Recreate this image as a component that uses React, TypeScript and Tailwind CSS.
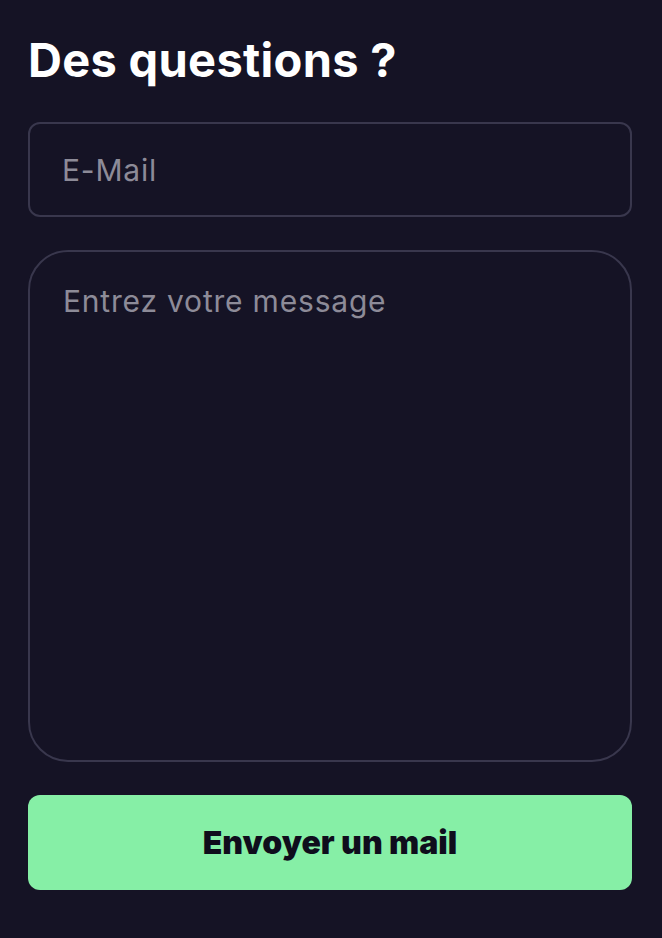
import React from "react";

export default function App() {
  return (
    <div
      className="min-h-screen w-full bg-[#151325] pl-7 pr-[30px] pt-[32px] pb-12"
      style={{ fontFamily: "Inter, 'Liberation Sans', sans-serif" }}
    >
      <h1 className="text-[47px] leading-[56px] font-bold text-white tracking-[0.3px]">
        Des questions ?
      </h1>
      <form className="mt-[34px] flex flex-col gap-[33px]" onSubmit={(e) => e.preventDefault()}>
        <input
          type="email"
          placeholder="E-Mail"
          className="h-[95px] w-full rounded-[12px] border-2 border-[#39374d] bg-transparent px-[32px] text-[30px] tracking-[0.8px] text-white placeholder:text-[#8d8b98] outline-none"
        />
        <textarea
          placeholder="Entrez votre message"
          className="h-[512px] w-full resize-none rounded-[40px] border-2 border-[#39374d] bg-transparent px-[33px] pt-[29px] text-[30px] leading-[40px] tracking-[0.8px] text-white placeholder:text-[#8d8b98] outline-none"
        />
        <button
          type="submit"
          className="h-[95px] w-full rounded-[12px] bg-[#86efa6] text-[32px] font-black tracking-[0px] text-[#0f0d1c]"
        >
          Envoyer un mail
        </button>
      </form>
    </div>
  );
}
